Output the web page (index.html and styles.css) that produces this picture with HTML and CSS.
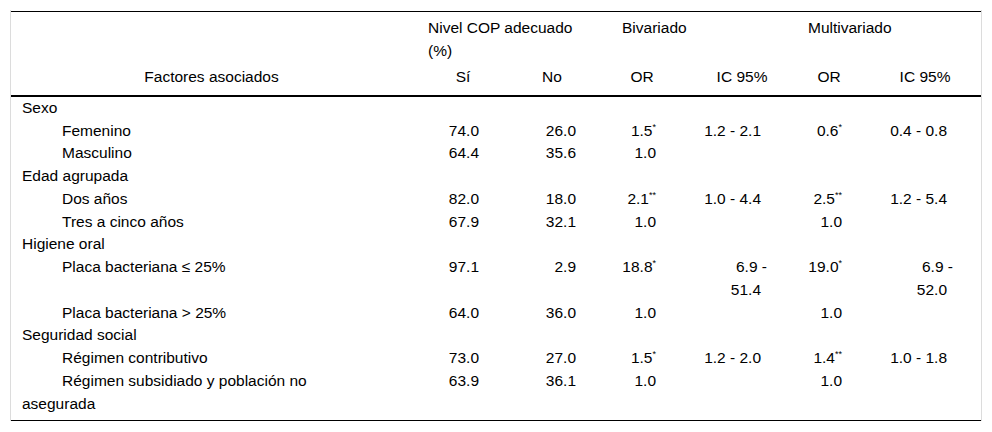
FILE: index.html
```html
<!DOCTYPE html>
<html lang="es">
<head>
<meta charset="utf-8">
<title>Factores asociados</title>
<link rel="stylesheet" href="styles.css">
</head>
<body>
<div class="wrap">
<table class="tbl">
<colgroup>
<col class="w1"><col class="w2"><col class="w3"><col class="w4"><col class="w5"><col class="w6"><col class="w7">
</colgroup>
<thead>
<tr class="grp">
<td class="blank"></td>
<th colspan="2" class="g-nivel">Nivel COP adecuado (%)</th>
<th colspan="2" class="g-biv">Bivariado</th>
<th colspan="2" class="g-mul">Multivariado</th>
</tr>
<tr class="sub">
<th>Factores asociados</th>
<th>Sí</th>
<th>No</th>
<th>OR</th>
<th>IC 95%</th>
<th>OR</th>
<th>IC 95%</th>
</tr>
</thead>
<tbody>
<tr class="cat"><td>Sexo</td><td></td><td></td><td></td><td></td><td></td><td></td></tr>
<tr class="item"><td>Femenino</td><td>74.0</td><td>26.0</td><td>1.5<sup>*</sup></td><td>1.2 - 2.1</td><td>0.6<sup>*</sup></td><td>0.4 - 0.8</td></tr>
<tr class="item"><td>Masculino</td><td>64.4</td><td>35.6</td><td>1.0</td><td></td><td></td><td></td></tr>
<tr class="cat"><td>Edad agrupada</td><td></td><td></td><td></td><td></td><td></td><td></td></tr>
<tr class="item"><td>Dos años</td><td>82.0</td><td>18.0</td><td>2.1<sup>**</sup></td><td>1.0 - 4.4</td><td>2.5<sup>**</sup></td><td>1.2 - 5.4</td></tr>
<tr class="item"><td>Tres a cinco años</td><td>67.9</td><td>32.1</td><td>1.0</td><td></td><td>1.0</td><td></td></tr>
<tr class="cat"><td>Higiene oral</td><td></td><td></td><td></td><td></td><td></td><td></td></tr>
<tr class="item"><td>Placa bacteriana ≤ 25%</td><td>97.1</td><td>2.9</td><td>18.8<sup>*</sup></td><td><span class="hang">6.9 -</span><br>51.4</td><td>19.0<sup>*</sup></td><td><span class="hang">6.9 -</span><br>52.0</td></tr>
<tr class="item"><td>Placa bacteriana &gt; 25%</td><td>64.0</td><td>36.0</td><td>1.0</td><td></td><td>1.0</td><td></td></tr>
<tr class="cat"><td>Seguridad social</td><td></td><td></td><td></td><td></td><td></td><td></td></tr>
<tr class="item"><td>Régimen contributivo</td><td>73.0</td><td>27.0</td><td>1.5<sup>*</sup></td><td>1.2 - 2.0</td><td>1.4<sup>**</sup></td><td>1.0 - 1.8</td></tr>
<tr class="item last"><td>Régimen subsidiado y población no asegurada</td><td>63.9</td><td>36.1</td><td>1.0</td><td></td><td>1.0</td><td></td></tr>
</tbody>
</table>
</div>
</body>
</html>
```
FILE: styles.css
```css
* { box-sizing: border-box; }

body {
  margin: 0;
  background: #fff;
  color: #000;
  font-family: "Liberation Sans", Arial, sans-serif;
  font-size: 15.5px;
}

.wrap {
  margin: 10px 0 0 10px;
  width: 972px;
  padding-top: 1px;
  border-left: 1px solid #dcdcdc;
  border-right: 1px solid #dcdcdc;
}

.tbl {
  width: 970px;
  table-layout: fixed;
  border-collapse: separate;
  border-spacing: 0;
  border-top: 1px solid #000;
  border-bottom: 1px solid #000;
  line-height: 22.75px;
}

.w1 { width: 401px; }
.w2 { width: 101px; }
.w3 { width: 87px; }
.w4 { width: 100px; }
.w5 { width: 85px; }
.w6 { width: 85px; }
.w7 { width: 111px; }

th, td {
  padding: 0;
  font-weight: normal;
  vertical-align: top;
}

/* header row 1 */
.grp th, .grp td {
  text-align: left;
  padding-top: 5px;
}
.g-nivel { padding-left: 16px; padding-right: 10px; }
.g-biv { padding-left: 22px; }
.g-mul { padding-left: 23px; }

/* header row 2 */
.sub th {
  text-align: center;
  padding-top: 3.5px;
  padding-bottom: 6px;
  border-bottom: 2px solid #000;
}
.sub th:nth-child(2) { padding-left: 1px; }
.sub th:nth-child(3) { padding-right: 9px; }
.sub th:nth-child(4) { padding-right: 16px; }
.sub th:nth-child(5) { padding-right: 1px; }
.sub th:nth-child(6) { padding-left: 3px; }
.sub th:nth-child(7) { padding-right: 1px; }

/* body */
tbody td { text-align: right; }
tbody td:first-child {
  text-align: left;
  padding-left: 11px;
  padding-right: 60px;
}
.item td:first-child { text-indent: 40px; }
tbody td:nth-child(2) { padding-right: 34px; }
tbody td:nth-child(3) { padding-right: 24px; }
tbody td:nth-child(4) { padding-right: 44px; }
tbody td:nth-child(5) { padding-right: 24px; }
tbody td:nth-child(6) { padding-right: 28px; }
tbody td:nth-child(7) { padding-right: 34px; }

.last td { padding-bottom: 4.5px; }

.hang { margin-right: -6px; }

sup {
  font-size: 9px;
  line-height: 0;
  vertical-align: 6px;
}
```
